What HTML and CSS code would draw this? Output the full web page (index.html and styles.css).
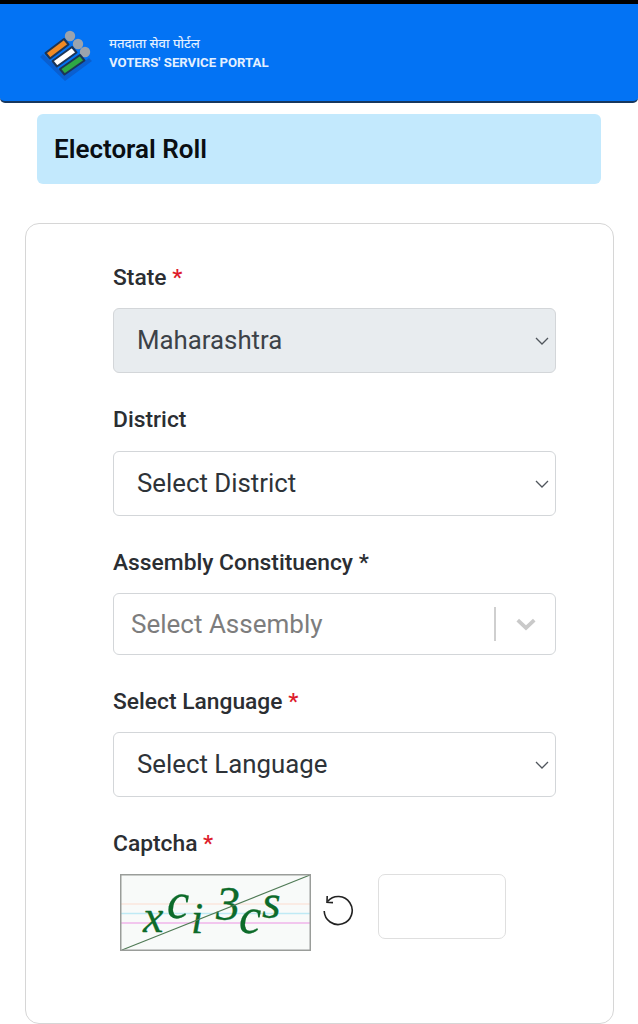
FILE: index.html
```html
<!DOCTYPE html>
<html lang="en">
<head>
<meta charset="utf-8">
<title>Electoral Roll</title>
<link rel="stylesheet" href="styles.css">
</head>
<body>
<header class="topbar">
  <svg class="logo" viewBox="0 0 60 60" width="60" height="60" aria-hidden="true">
    <path d="M5 31 L30 55 L57 35 L54 32 L30 49 L8 28 Z" fill="#0a5fd0"/>
    <circle cx="35" cy="10" r="5.2" fill="#9aa3ad"/>
    <circle cx="43" cy="18" r="5.2" fill="#9aa3ad"/>
    <circle cx="50" cy="26" r="5.2" fill="#9aa3ad"/>
    <g stroke="#1c3557" stroke-width="2" stroke-linejoin="round">
      <path d="M10.500 27 L29 13 L33.500 18.500 L15 32.500 Z" fill="#f08a24"/>
      <path d="M17.500 35 L37 21 L41.500 26.500 L22 40.500 Z" fill="#ffffff"/>
      <path d="M25 43 L45 29 L49.500 34.500 L29.500 48.500 Z" fill="#2ea843"/>
    </g>
  </svg>
  <div class="brand">
    <div class="brand-hi" lang="hi">मतदाता सेवा पोर्टल</div>
    <div class="brand-en">VOTERS' SERVICE PORTAL</div>
  </div>
</header>

<div class="banner"><h1>Electoral Roll</h1></div>

<main class="card">
  <form class="form">
    <div class="field field-state">
      <label class="label">State <span class="req">*</span></label>
      <select class="select select-disabled" disabled><option>Maharashtra</option></select>
    </div>
    <div class="field field-district">
      <label class="label">District</label>
      <select class="select"><option>Select District</option></select>
    </div>
    <div class="field field-assembly">
      <label class="label">Assembly Constituency *</label>
      <div class="combo">
        <span class="combo-text">Select Assembly</span>
        <span class="combo-sep"></span>
        <svg class="combo-arrow" viewBox="0 0 20 20" width="22" height="22" aria-hidden="true">
          <path d="M2.500 6.500 L10 13.500 L17.500 6.500" fill="none" stroke="#c9c9c9" stroke-width="3.400"/>
        </svg>
      </div>
    </div>
    <div class="field field-language">
      <label class="label">Select Language <span class="req">*</span></label>
      <select class="select"><option>Select Language</option></select>
    </div>
    <div class="field">
      <label class="label">Captcha <span class="req">*</span></label>
      <div class="captcha-row">
        <svg class="captcha" viewBox="0 0 191 77" width="191" height="77" role="img" aria-label="captcha">
          <rect x="0" y="0" width="191" height="77" fill="#f8faf9"/>
          <path d="M1 30 H190" stroke="#fbe6dc" stroke-width="1.500"/>
          <path d="M1 39.500 H190" stroke="#bfeaf5" stroke-width="1.500"/>
          <path d="M1 49 H190" stroke="#f0b4ea" stroke-width="1.500"/>
          <g class="captcha-text">
            <text x="23" y="58" font-size="46">x</text>
            <text x="47" y="44" font-size="50">c</text>
            <text x="71" y="59" font-size="44">i</text>
            <text x="96" y="46" font-size="48">3</text>
            <text x="119" y="59" font-size="50">c</text>
            <text x="142" y="44" font-size="48">s</text>
          </g>
          <path d="M2 76 L190 1" stroke="#4f7a55" stroke-width="1.100"/>
          <rect x="0.750" y="0.750" width="189.500" height="75.500" fill="none" stroke="#9a9d9a" stroke-width="1.500"/>
        </svg>
        <svg class="refresh" viewBox="0 0 32 32" width="32" height="32" aria-hidden="true">
          <path d="M5.500 7.500 A14 14 0 1 1 2.200 17" fill="none" stroke="#222222" stroke-width="1.600"/>
          <path d="M5.200 2 L5 8.200 L11 8.600" fill="none" stroke="#222222" stroke-width="1.600"/>
        </svg>
        <input class="captcha-input" type="text" aria-label="Captcha">
      </div>
    </div>
  </form>
</main>
</body>
</html>
```
FILE: styles.css
```css
* { box-sizing: border-box; }

html, body {
  margin: 0;
  padding: 0;
  background: #ffffff;
}

body {
  width: 638px;
  height: 1024px;
  overflow: hidden;
  font-family: Roboto, "Noto Sans", "Liberation Sans", sans-serif;
  color: #212529;
}

.topbar {
  display: flex;
  align-items: center;
  height: 103px;
  border-top: 4px solid #000000;
  border-bottom: 2px solid #17375e;
  border-radius: 0 0 5px 5px;
  background: #0373f4;
  padding-left: 35px;
  gap: 14px;
}

.logo { flex: none; margin-top: 6px; }

.brand {
  display: flex;
  flex-direction: column;
  gap: 4px;
  color: #e4f0ff;
}

.brand-hi {
  font-family: "Noto Sans", "Noto Sans Devanagari", Roboto, sans-serif;
  font-size: 13px;
  line-height: 15px;
  font-weight: 500;
}

.brand-en {
  font-size: 13.200px;
  line-height: 15px;
  font-weight: 700;
}

.banner {
  display: flex;
  align-items: center;
  width: 564px;
  height: 70px;
  margin: 11px 0 0 37px;
  padding-left: 17px;
  background: #c3e9fd;
  border-radius: 6px;
}

.banner h1 {
  margin: 0;
  font-size: 26px;
  font-weight: 600;
  color: #0a0e12;
}

.card {
  width: 589px;
  height: 801px;
  margin: 39px 0 0 25px;
  padding: 40px 57px 0 87px;
  border: 1.500px solid #d6d6d6;
  border-radius: 14px;
}

.form {
  display: flex;
  flex-direction: column;
}

.field { display: flex; flex-direction: column; }
.field-state { margin-bottom: 33px; }
.field-district { margin-bottom: 33px; }
.field-assembly { margin-bottom: 33px; }
.field-language { margin-bottom: 33px; }

.label {
  font-size: 22.800px;
  line-height: 28px;
  font-weight: 500;
  color: #2b2e32;
  margin-bottom: 16px;
}

.field-district .label { margin-bottom: 17px; }

.req { color: #dd1c2c; }

.select {
  appearance: none;
  -webkit-appearance: none;
  display: block;
  width: 443px;
  height: 65px;
  padding: 0 40px 2px 23px;
  font-family: inherit;
  font-size: 25.800px;
  color: #2e3338;
  opacity: 1;
  background-color: #ffffff;
  background-image: url("data:image/svg+xml,%3Csvg xmlns='http://www.w3.org/2000/svg' viewBox='0 0 16 16'%3E%3Cpath d='M2 5l6 6 6-6' fill='none' stroke='%2350565c' stroke-width='1.300'/%3E%3C/svg%3E");
  background-repeat: no-repeat;
  background-position: right 5px center;
  background-size: 16px 16px;
  border: 1px solid #d3d6d9;
  border-radius: 6px;
}

.select-disabled {
  background-color: #e8ecef;
  color: #3c4248;
}

.combo {
  display: flex;
  align-items: center;
  width: 443px;
  height: 62px;
  padding-left: 17px;
  border: 1px solid #d3d6d9;
  border-radius: 6px;
  background: #ffffff;
}

.combo-text {
  flex: 1;
  font-size: 26px;
  color: #7d7d7d;
}

.combo-sep {
  width: 2px;
  height: 34px;
  background: #cfcfcf;
}

.combo-arrow {
  flex: none;
  margin: 0 18px 0 19px;
}

.captcha-row {
  display: flex;
  align-items: flex-start;
  padding-left: 7px;
}

.captcha { flex: none; display: block; }

.captcha-text {
  font-family: "Liberation Serif", serif;
  font-style: italic;
  fill: #0d6b2a;
  stroke: #0d6b2a;
  stroke-width: 0.300px;
}

.refresh {
  flex: none;
  margin: 20px 0 0 11px;
}

.captcha-input {
  width: 128px;
  height: 65px;
  margin-left: 24px;
  border: 1.500px solid #dfdfdf;
  border-radius: 7px;
  background: #ffffff;
}
```
